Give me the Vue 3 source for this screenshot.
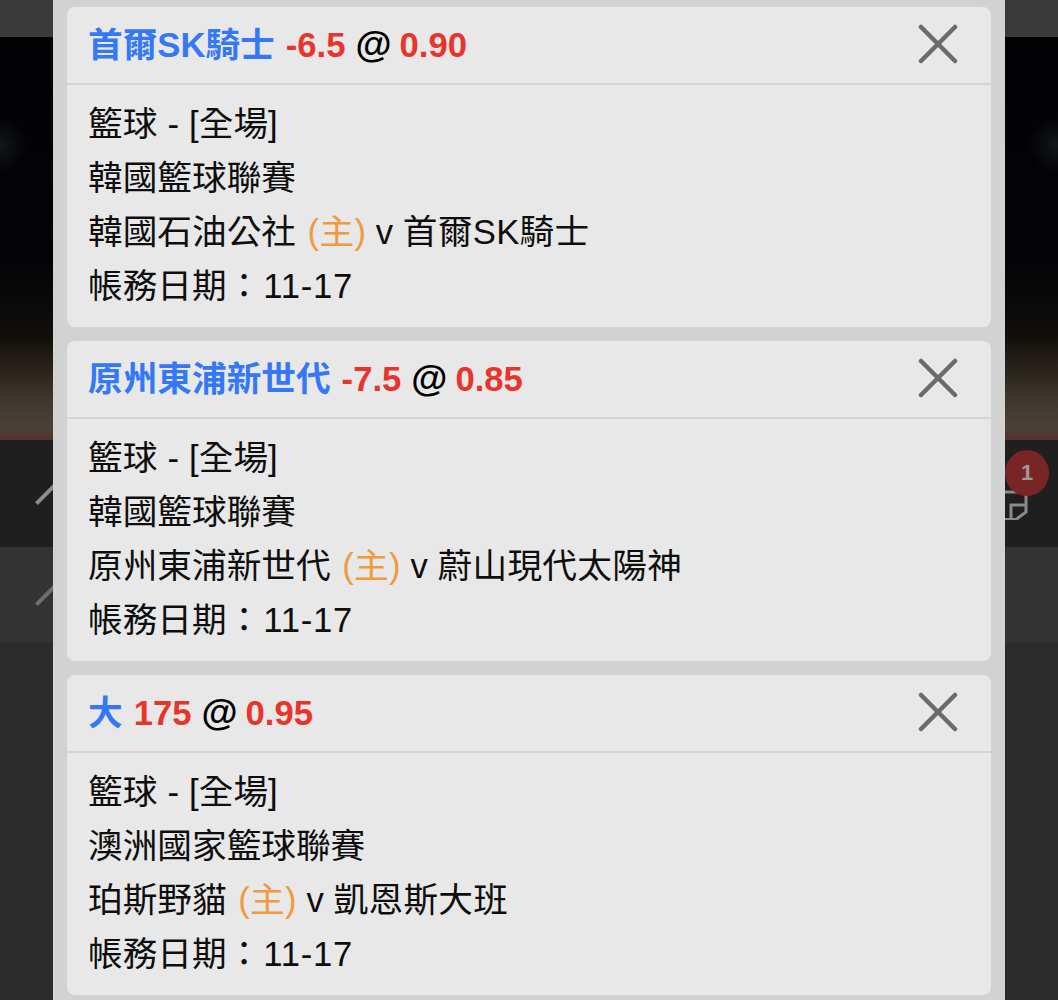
<script setup>
const cards = [
  { team: '首爾SK騎士', line: '-6.5', odds: '0.90', league: '韓國籃球聯賽', home: '韓國石油公社', away: '首爾SK騎士' },
  { team: '原州東浦新世代', line: '-7.5', odds: '0.85', league: '韓國籃球聯賽', home: '原州東浦新世代', away: '蔚山現代太陽神' },
  { team: '大', line: '175', odds: '0.95', league: '澳洲國家籃球聯賽', home: '珀斯野貓', away: '凱恩斯大班' }
]
</script>

<template>
  <div class="page">
    <div class="backdrop">
      <div class="top-bar"></div>
      <div class="photo"></div>
      <div class="row row-one">
        <span class="tick"></span>
        <div class="slip-icon">
          <svg width="40" height="50" viewBox="0 0 40 50" fill="none" stroke="#8a8a8a" stroke-width="3">
            <path d="M13 22H34V42L24 49.5H13" />
            <path d="M34 35H19V49.5" />
          </svg>
          <span class="badge">1</span>
        </div>
      </div>
      <div class="row row-two">
        <span class="tick"></span>
      </div>
      <div class="rest"></div>
    </div>

    <div class="modal">
      <section v-for="card in cards" :key="card.team" class="card">
        <header class="card-head">
          <div class="title">
            <span class="team">{{ card.team }}</span>
            <span class="red">{{ card.line }}</span>
            <span class="at">@</span>
            <span class="red">{{ card.odds }}</span>
          </div>
          <svg class="close" width="40" height="40" viewBox="0 0 40 40" stroke="#6b6b6b" stroke-width="4.5" stroke-linecap="round">
            <path d="M3 3L37 37M37 3L3 37" />
          </svg>
        </header>
        <div class="card-body">
          <div class="sport">籃球 - [全場]</div>
          <div>{{ card.league }}</div>
          <div>{{ card.home }} <span class="home-tag">(主)</span> v <span class="away">{{ card.away }}</span></div>
          <div>帳務日期：<span class="date-value">11-17</span></div>
        </div>
      </section>
    </div>
  </div>
</template>

<style>
html, body { margin: 0; background: #2c2c2c; }
</style>

<style scoped>
.page {
  position: relative;
  width: 1058px;
  height: 1000px;
  overflow: hidden;
  font-family: "Liberation Sans", "Noto Sans CJK TC", sans-serif;
}
.backdrop {
  display: flex;
  flex-direction: column;
  height: 100%;
}
.top-bar { height: 37px; background: #3a3a3a; }
.photo {
  height: 403px;
  background:
    linear-gradient(to bottom, rgba(100,30,25,0) 97%, rgba(100,30,25,.45) 100%),
    radial-gradient(circle 28px at 0 108px, rgba(60,70,85,.28), rgba(60,70,85,0)),
    radial-gradient(circle 28px at 1056px 108px, rgba(60,70,85,.28), rgba(60,70,85,0)),
    linear-gradient(to bottom, #020204 0%, #040406 55%, #0a090a 66%, #13100c 75%, #2e2720 84%, #3f382e 90%, #4a4138 97%, #4a4138 100%);
}
.row {
  position: relative;
  flex: none;
}
.row-one { height: 107px; background: #1f1f1f; }
.row-two { height: 95px; background: #333333; }
.rest { flex: 1; background: #2c2c2c; }
.tick {
  position: absolute;
  left: 32px;
  top: 45px;
  width: 30px;
  height: 4px;
  background: #6e6e6e;
  transform: rotate(-45deg);
}
.row-one .tick { top: 51px; background: #8a8a8a; }
.slip-icon {
  position: absolute;
  left: 992px;
  top: 0;
  width: 66px;
  height: 107px;
}
.slip-icon svg { position: absolute; left: 0; top: 30px; }
.badge {
  position: absolute;
  left: 13px;
  top: 10px;
  width: 44px;
  height: 46px;
  border-radius: 50%;
  background: #7a2525;
  color: #9c9c9c;
  font-size: 22px;
  font-weight: 700;
  line-height: 46px;
  text-align: center;
}
.modal {
  position: absolute;
  left: 53px;
  top: 0;
  bottom: 0;
  width: 952px;
  box-sizing: border-box;
  padding: 7px 14px 0;
  display: flex;
  flex-direction: column;
  gap: 14px;
  background: #d2d2d2;
}
.card {
  height: 320px;
  flex: none;
  border-radius: 8px;
  background: #e8e8e8;
  overflow: hidden;
}
.card-head {
  height: 78px;
  box-sizing: border-box;
  padding: 0 33px 0 21px;
  display: flex;
  align-items: center;
  justify-content: space-between;
  border-bottom: 2px solid #d4d4d4;
}
.title {
  font-size: 34.67px;
  font-weight: 700;
  line-height: 76px;
  white-space: nowrap;
}
.team { color: #3478f6; }
.red { color: #e8352b; margin-left: 11px; }
.at { color: #000; margin-left: 10px; font-size: 37px; }
.at + .red { margin-left: 8px; }
.close { flex: none; margin-top: -2px; }
.card-body {
  padding: 12px 21px 0;
  font-size: 34.67px;
  line-height: 54px;
  color: #0e0e0e;
  white-space: nowrap;
}
.sport { word-spacing: .5px; }
.home-tag { color: #f09a3e; margin-left: 2px; letter-spacing: .3px; }
.away { letter-spacing: .3px; }
.date-value { margin-left: 2px; letter-spacing: .7px; }
</style>
